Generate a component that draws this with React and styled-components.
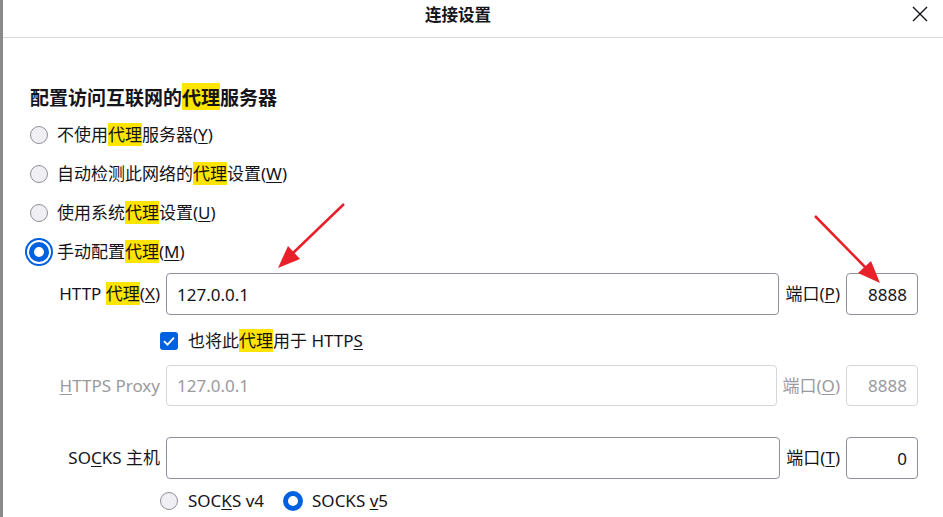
import React from "react";
import styled, { createGlobalStyle } from "styled-components";

const Global = createGlobalStyle`
  html, body { margin: 0; padding: 0; background: #fff; }
  body { font-family: "Noto Sans", "Noto Sans CJK SC", sans-serif; color: #15141a; }
`;

const Page = styled.div`
  position: relative;
  width: 943px;
  height: 517px;
  box-sizing: border-box;
  border-left: 3px solid #8a8a8a;
  overflow: hidden;
  background: #fff;
`;

const Header = styled.div`
  height: 37px;
  border-bottom: 1px solid #d8d8dc;
  display: flex;
  align-items: center;
  justify-content: center;
  padding-right: 30px;
  position: relative;
`;

const Title = styled.div`
  font-family: "Noto Sans CJK SC", sans-serif;
  font-weight: 700;
  font-size: 16.5px;
  line-height: 20px;
  margin-top: -10px;
`;

const Close = styled.div`
  position: absolute;
  right: 15px;
  top: 5px;
  width: 16px;
  height: 16px;
`;

const Body = styled.div`
  padding: 47px 25px 0 27px;
  font-size: 17px;
`;

const Heading = styled.div`
  font-family: "Noto Sans CJK SC", sans-serif;
  font-weight: 700;
  font-size: 19px;
  line-height: 24px;
  margin-bottom: 6px;
`;

const OptRow = styled.div`
  height: 39px;
  display: flex;
  align-items: center;
  gap: 9px;
`;

const Radio = styled.span`
  box-sizing: border-box;
  width: ${(p) => (p.$checked ? 20 : 18)}px;
  height: ${(p) => (p.$checked ? 20 : 18)}px;
  margin: ${(p) => (p.$checked ? "0 -1px" : "0")};
  border-radius: 50%;
  flex: none;
  background: ${(p) => (p.$checked ? "#fff" : "#f0f0f4")};
  border: ${(p) => (p.$checked ? "5px solid #0061e0" : "1px solid #8f8f9d")};
  box-shadow: ${(p) =>
    p.$focus ? "0 0 0 2px #fff, 0 0 0 4px #0061e0" : "none"};
`;

const Label = styled.span`
  line-height: 24px;
  white-space: nowrap;
  color: ${(p) => (p.$disabled ? "#9a9a9e" : "#15141a")};
`;

const Hl = styled.span`
  background: #ffe500;
`;

const U = styled.span`
  text-decoration: underline;
  text-underline-offset: 2px;
`;

const FieldRow = styled.div`
  display: flex;
  align-items: center;
  height: ${(p) => p.$h || 42}px;
  margin-top: ${(p) => p.$mt || 0}px;
  margin-left: -27px;
  gap: 6px;
`;

const FieldLabel = styled.div`
  width: 157px;
  flex: none;
  text-align: right;
  white-space: nowrap;
  line-height: 24px;
  color: ${(p) => (p.$disabled ? "#9a9a9e" : "#15141a")};
`;

const Input = styled.div`
  box-sizing: border-box;
  height: 100%;
  flex: ${(p) => (p.$port ? "none" : "1")};
  width: ${(p) => (p.$port ? "72px" : "auto")};
  border: 1px solid ${(p) => (p.$disabled ? "#d6d6da" : "#8f8f9d")};
  border-radius: 4px;
  display: flex;
  align-items: center;
  justify-content: ${(p) => (p.$port ? "flex-end" : "flex-start")};
  padding: 0 10px;
  color: ${(p) => (p.$disabled ? "#9a9a9e" : "#15141a")};
`;

const CheckRow = styled.div`
  display: flex;
  align-items: center;
  gap: 10px;
  height: 30px;
  margin-top: 11px;
  margin-left: 130px;
`;

const Check = styled.span`
  width: 18px;
  height: 18px;
  border-radius: 3px;
  background: #0061e0;
  display: flex;
  align-items: center;
  justify-content: center;
  flex: none;
`;

const VersionRow = styled.div`
  display: flex;
  align-items: center;
  height: 30px;
  margin-top: 7px;
  margin-left: 130px;
`;

const VersionItem = styled.div`
  display: flex;
  align-items: center;
  gap: 10px;
  margin-right: ${(p) => p.$mr || 0}px;
`;

const Overlay = styled.svg`
  position: absolute;
  left: -3px;
  top: 0;
  pointer-events: none;
`;

export default function App() {
  return (
    <Page>
      <Global />
      <Header>
        <Title>连接设置</Title>
        <Close>
          <svg width="16" height="16" viewBox="0 0 16 16">
            <path d="M1 1 L15 15 M15 1 L1 15" stroke="#15141a" strokeWidth="1.4" />
          </svg>
        </Close>
      </Header>
      <Body>
        <Heading>
          配置访问互联网的<Hl>代理</Hl>服务器
        </Heading>
        <OptRow>
          <Radio />
          <Label>
            不使用<Hl>代理</Hl>服务器(<U>Y</U>)
          </Label>
        </OptRow>
        <OptRow>
          <Radio />
          <Label>
            自动检测此网络的<Hl>代理</Hl>设置(<U>W</U>)
          </Label>
        </OptRow>
        <OptRow>
          <Radio />
          <Label>
            使用系统<Hl>代理</Hl>设置(<U>U</U>)
          </Label>
        </OptRow>
        <OptRow>
          <Radio $checked $focus />
          <Label>
            手动配置<Hl>代理</Hl>(<U>M</U>)
          </Label>
        </OptRow>

        <FieldRow $mt={2}>
          <FieldLabel>
            HTTP <Hl>代理</Hl>(<U>X</U>)
          </FieldLabel>
          <Input>127.0.0.1</Input>
          <Label>
            端口(<U>P</U>)
          </Label>
          <Input $port>8888</Input>
        </FieldRow>

        <CheckRow>
          <Check>
            <svg width="14" height="14" viewBox="0 0 14 14">
              <path d="M2 7.2 L5.5 10.6 L12 3.6" fill="none" stroke="#fff" strokeWidth="1.8" />
            </svg>
          </Check>
          <Label>
            也将此<Hl>代理</Hl>用于 HTTP<U>S</U>
          </Label>
        </CheckRow>

        <FieldRow $mt={9} $h={41}>
          <FieldLabel $disabled>
            <U>H</U>TTPS Proxy
          </FieldLabel>
          <Input $disabled>127.0.0.1</Input>
          <Label $disabled>
            端口(<U>O</U>)
          </Label>
          <Input $port $disabled>8888</Input>
        </FieldRow>

        <FieldRow $mt={31}>
          <FieldLabel>
            SO<U>C</U>KS 主机
          </FieldLabel>
          <Input />
          <Label>
            端口(<U>T</U>)
          </Label>
          <Input $port>0</Input>
        </FieldRow>

        <VersionRow>
          <VersionItem $mr={20}>
            <Radio />
            <Label>
              SOC<U>K</U>S v4
            </Label>
          </VersionItem>
          <VersionItem>
            <Radio $checked />
            <Label>
              SOCKS <U>v</U>5
            </Label>
          </VersionItem>
        </VersionRow>
      </Body>

      <Overlay width="943" height="517" viewBox="0 0 943 517">
        <line x1="344" y1="204" x2="292" y2="254" stroke="#e8202a" strokeWidth="2.5" />
        <polygon points="278,268 300,259 288,246" fill="#e8202a" />
        <line x1="815" y1="216" x2="866" y2="268" stroke="#e8202a" strokeWidth="2.5" />
        <polygon points="880,283 858,273 871,261" fill="#e8202a" />
      </Overlay>
    </Page>
  );
}
